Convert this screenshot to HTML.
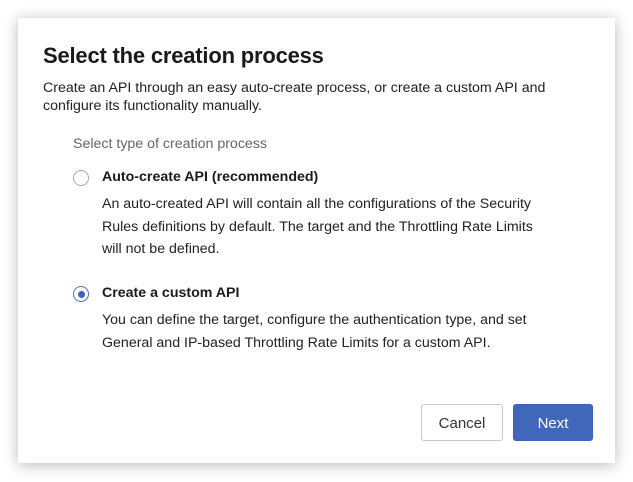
<!DOCTYPE html>
<html><head><meta charset="utf-8"><style>
html,body{margin:0;padding:0;background:#fff;width:633px;height:482px;overflow:hidden;font-family:"Liberation Sans",sans-serif;color:#1f1f1f}
.dlg{position:absolute;left:18px;top:18px;width:597px;height:445px;background:#fff;box-shadow:0 2px 14px rgba(0,0,0,0.28)}
.t{position:absolute;left:25px;top:25px;font-size:22px;font-weight:bold;color:#1a1a1a;letter-spacing:-0.2px}
.d{position:absolute;left:25px;top:61px;width:540px;font-size:14.2px;line-height:18px;color:#222}
.s{position:absolute;left:55px;top:118px;font-size:14.2px;color:#666}
.r{position:absolute;left:55px;width:14px;height:14px;border:1px solid #aaa;border-radius:50%;background:#fff}
.r.on{border-color:#4a6fc0}
.r.on::after{content:"";position:absolute;left:3.5px;top:3.5px;width:7px;height:7px;border-radius:50%;background:#3d63b8}
.lb{position:absolute;left:84px;font-size:14.2px;font-weight:bold;color:#1a1a1a}
.ds{position:absolute;left:84px;width:451px;font-size:14.2px;line-height:22.5px;color:#222}
.btn{position:absolute;top:386px;height:37px;border-radius:3px;font-size:15px;text-align:center;line-height:37px;box-sizing:border-box}
.c{left:403px;width:82px;border:1px solid #c8c8c8;color:#333;background:#fff}
.n{left:495px;width:80px;background:#4167bb;color:#fff;border:1px solid #3d62b5}
</style></head><body>
<div class="dlg">
<div class="t">Select the creation process</div>
<div class="d">Create an API through an easy auto-create process, or create a custom API and configure its functionality manually.</div>
<div class="s">Select type of creation process</div>
<div class="r" style="top:152px"></div>
<div class="lb" style="top:151px">Auto-create API (recommended)</div>
<div class="ds" style="top:175px">An auto-created API will contain all the configurations of the Security Rules definitions by default. The target and the Throttling Rate Limits will not be defined.</div>
<div class="r on" style="top:268px"></div>
<div class="lb" style="top:267px">Create a custom API</div>
<div class="ds" style="top:291px">You can define the target, configure the authentication type, and set General and IP-based Throttling Rate Limits for a custom API.</div>
<div class="btn c">Cancel</div>
<div class="btn n">Next</div>
</div>
</body></html>
